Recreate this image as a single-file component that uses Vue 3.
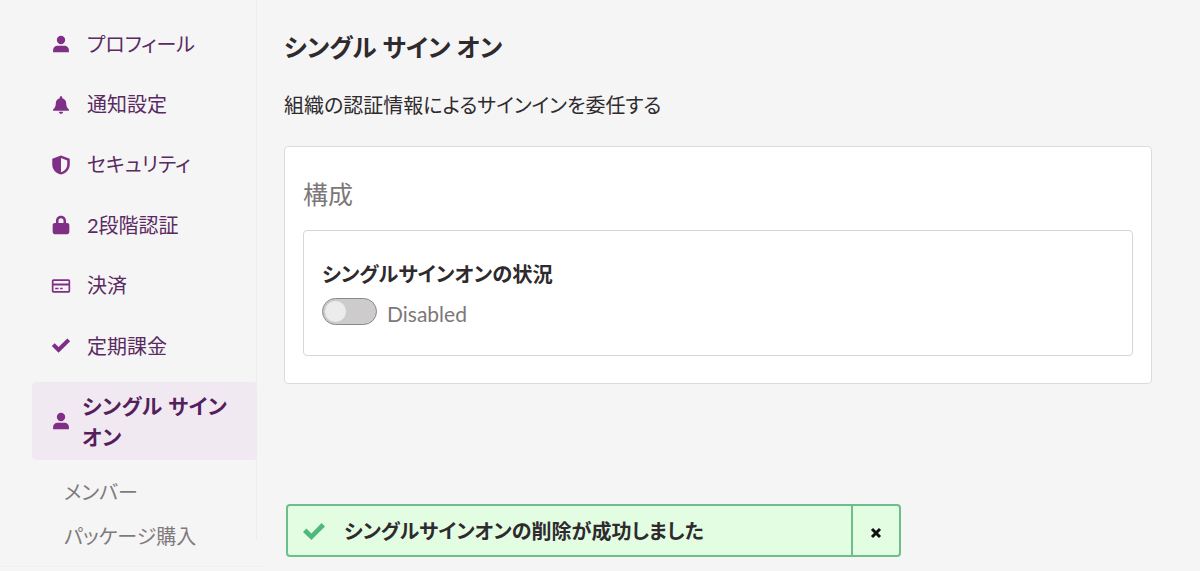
<template>
  <div class="page">
    <aside class="sidebar">
      <a v-for="item in menu" :key="item.label" class="nav-item" :class="{ active: item.active }">
        <svg class="nav-icon" viewBox="0 0 24 24" v-html="icons[item.icon]"></svg>
        <span>{{ item.label }}</span>
      </a>
      <a class="sub-item first">メンバー</a>
      <a class="sub-item">パッケージ購入</a>
    </aside>

    <main class="content">
      <h1>シングル サイン オン</h1>
      <p class="lead">組織の認証情報によるサインインを委任する</p>

      <section class="card">
        <h2>構成</h2>
        <div class="inner">
          <h3>シングルサインオンの状況</h3>
          <div class="status">
            <span class="switch"><span class="knob"></span></span>
            <span class="status-text">Disabled</span>
          </div>
        </div>
      </section>
    </main>

    <div class="toast">
      <div class="toast-body">
        <svg class="toast-check" viewBox="0 0 24 24"><path d="M1 13l3.400-3.400 5 5L19.600 4 23 7.400 9.400 21z" /></svg>
        <span>シングルサインオンの削除が成功しました</span>
      </div>
      <button class="toast-close">
        <svg viewBox="0 0 12 12"><path d="M2 2l8 8M10 2l-8 8" /></svg>
      </button>
    </div>
  </div>
</template>

<script setup>
const icons = {
  user: '<circle cx="12" cy="7.200" r="5"/><path d="M2.500 22v-2.800c0-3.200 2.600-5.200 5-5.200h9c2.400 0 5 2 5 5.200V22z"/>',
  bell: '<path d="M12 1.500c.9 0 1.500.6 1.500 1.500v.9c3.200.8 4.800 3.400 4.800 6.600 0 3.200 1 4.800 3.200 6.900v1.600h-19v-1.600c2.200-2.100 3.200-3.700 3.200-6.900 0-3.200 1.600-5.800 4.800-6.600V3c0-.9.600-1.500 1.500-1.500z"/><path d="M9.500 20h5c0 1.400-1.100 2.500-2.500 2.500S9.500 21.400 9.500 20z"/>',
  shield: '<path fill-rule="evenodd" d="M12 .5l10.500 4v7c0 5.800-4.400 10.700-10.500 12C5.900 22.200 1.500 17.300 1.500 11.500v-7zM12 3.500v17.300c4.500-1.200 7.500-5 7.500-9.300V6.500z"/>',
  lock: '<path fill-rule="evenodd" d="M12 1c3.700 0 6 2.600 6 6v2.500h1.500c1.300 0 2.500 1.100 2.500 2.500v8.500c0 1.400-1.200 2.500-2.500 2.500h-15C3.200 23 2 21.900 2 20.500V12c0-1.400 1.200-2.500 2.500-2.500H6V7c0-3.400 2.300-6 6-6zm0 3c-1.900 0-3 1.300-3 3v2.500h6V7c0-1.700-1.100-3-3-3z"/>',
  card: '<path fill-rule="evenodd" d="M3 4h18c1.200 0 2 .9 2 2v12c0 1.200-.8 2-2 2H3c-1.200 0-2-.8-2-2V6c0-1.100.8-2 2-2zm0 2v3h18V6zm0 5.500V18h18v-6.500zM5 14h4v1.800H5zm6 0h3v1.800h-3z"/>',
  check: '<path d="M1 13l3.400-3.400 4.700 4.700L19.600 4 23 7.400 9.100 21.100z" transform="translate(0 -1)"/>',
}

const menu = [
  { label: 'プロフィール', icon: 'user' },
  { label: '通知設定', icon: 'bell' },
  { label: 'セキュリティ', icon: 'shield' },
  { label: '2段階認証', icon: 'lock' },
  { label: '決済', icon: 'card' },
  { label: '定期課金', icon: 'check' },
  { label: 'シングル サイン オン', icon: 'user', active: true },
]
</script>

<style>
html,
body {
  margin: 0;
  background: #f5f5f5;
  overflow: hidden;
}
</style>

<style scoped>
.page {
  position: relative;
  display: flex;
  height: 571px;
  font-family: "Lato", "Noto Sans CJK JP", sans-serif;
  font-feature-settings: "palt";
  color: #2e2a2d;
}

/* faint line under the sidebar */
.page::after {
  content: "";
  position: absolute;
  left: 0;
  top: 566px;
  width: 266px;
  height: 1px;
  background: #f0f0f0;
}

.sidebar {
  box-sizing: border-box;
  width: 257px;
  height: 540px;
  flex: none;
  padding: 14px 0 0 32px;
  border-right: 1px solid #ededed;
}

.nav-item {
  display: flex;
  align-items: center;
  height: 60.4px;
  padding-left: 19px;
  font-size: 20px;
  line-height: 31px;
  color: #5a2a62;
}

.nav-icon {
  width: 20px;
  height: 20px;
  flex: none;
  margin-right: 16px;
  fill: #7f2f86;
}

.nav-item.active {
  height: 78px;
  margin-top: 6px;
  margin-right: -1px;
  padding-right: 20px;
  border-radius: 4px;
  background: #f1e9f2;
  font-size: 21px;
  letter-spacing: 0.4px;
  font-weight: 700;
  color: #541f5c;
}

.nav-item.active .nav-icon {
  margin-right: 11px;
}

.sub-item {
  display: block;
  padding-left: 32px;
  font-size: 20px;
  line-height: 44px;
  color: #807a7d;
}

.sub-item.first {
  margin-top: 10px;
}

.content {
  flex: 1;
  padding: 28px 48px 0 27px;
}

h1 {
  margin: 0;
  font-size: 24.6px;
  line-height: 40px;
  font-weight: 700;
}

.lead {
  margin: 22px 0 0;
  font-size: 20px;
  line-height: 30px;
}

.card {
  box-sizing: border-box;
  height: 238px;
  margin-top: 26px;
  padding: 27px 18px 0;
  border: 1px solid #dcdcdc;
  border-radius: 4px;
  background: #fff;
}

h2 {
  margin: 0;
  font-size: 25px;
  line-height: 40px;
  font-weight: 400;
  color: #7d7779;
}

.inner {
  box-sizing: border-box;
  height: 126px;
  margin-top: 16px;
  padding: 28px 18px 0;
  border: 1px solid #d6d6d6;
  border-radius: 4px;
}

h3 {
  margin: 0;
  font-size: 20.3px;
  line-height: 30px;
  font-weight: 700;
}

.status {
  display: flex;
  align-items: center;
  gap: 10px;
  margin-top: 4px;
}

.switch {
  box-sizing: border-box;
  display: block;
  width: 55px;
  height: 27px;
  padding: 2px;
  border: 1px solid #8c8789;
  border-radius: 14px;
  background: #cdcbcc;
}

.knob {
  display: block;
  width: 21px;
  height: 21px;
  border-radius: 50%;
  background: #ececec;
}

.status-text {
  padding-top: 6px;
  font-size: 21px;
  line-height: 30px;
  color: #7d7779;
}

.toast {
  position: absolute;
  left: 286px;
  top: 504px;
  box-sizing: border-box;
  display: flex;
  width: 615px;
  height: 53px;
  border: 2px solid #6cbf8d;
  border-radius: 4px;
  background: #e2fde2;
}

.toast-body {
  display: flex;
  flex: 1;
  align-items: center;
  padding-left: 14px;
  font-size: 20px;
  font-weight: 700;
  color: #2e2a2d;
}

.toast-check {
  width: 24px;
  height: 24px;
  margin-right: 18px;
  fill: #4fb97c;
}

.toast-close {
  width: 48px;
  padding: 0;
  border: 0;
  border-left: 2px solid #6cbf8d;
  background: none;
  display: flex;
  align-items: center;
  justify-content: center;
}

.toast-close svg {
  width: 12px;
  height: 12px;
  margin-top: 4px;
  stroke: #111;
  stroke-width: 3;
  fill: none;
}
</style>
